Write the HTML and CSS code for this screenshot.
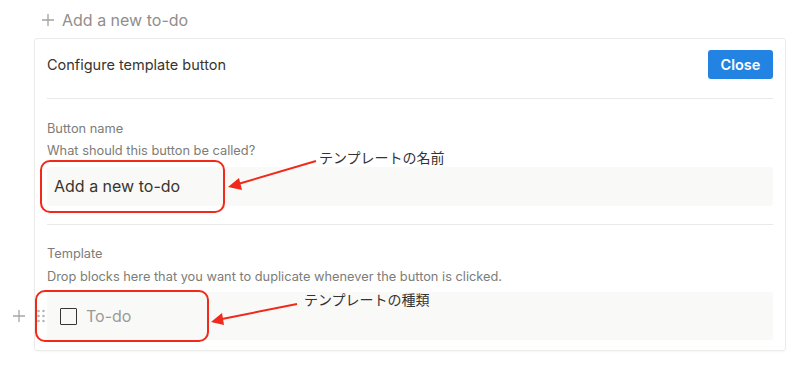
FILE: index.html
```html
<!DOCTYPE html>
<html>
<head>
    <meta charset="UTF-8">
    <title>Configure template button</title>
    <link rel="stylesheet" href="styles.css">
</head>
<body>
<div class="page">
    <div class="add-row">
        <svg class="plus" width="14" height="14" viewBox="0 0 14 14"><path d="M7 1v12M1 7h12" stroke="currentColor" stroke-width="1.3" fill="none"/></svg>
        <span>Add a new to-do</span>
    </div>

    <div class="card">
        <div class="card-head">
            <div class="card-title">Configure template button</div>
            <button class="btn-close">Close</button>
        </div>

        <div class="section">
            <div class="label">Button name</div>
            <div class="hint">What should this button be called?</div>
            <div class="name-box">Add a new to-do</div>
        </div>

        <div class="section last">
            <div class="label">Template</div>
            <div class="hint">Drop blocks here that you want to duplicate whenever the button is clicked.</div>
            <div class="tpl-box">
                <div class="block">
                    <div class="handles">
                        <svg class="plus-sm" width="14" height="14" viewBox="0 0 14 14"><path d="M7 1v12M1 7h12" stroke="currentColor" stroke-width="1.3" fill="none"/></svg>
                        <svg class="drag" width="8" height="14" viewBox="0 0 8 14">
                            <circle cx="1.5" cy="2" r="1.3"/><circle cx="6.5" cy="2" r="1.3"/>
                            <circle cx="1.5" cy="7" r="1.3"/><circle cx="6.5" cy="7" r="1.3"/>
                            <circle cx="1.5" cy="12" r="1.3"/><circle cx="6.5" cy="12" r="1.3"/>
                        </svg>
                    </div>
                    <span class="check"></span>
                    <span class="todo">To-do</span>
                </div>
            </div>
        </div>
    </div>

    <!-- 注釈 -->
    <svg class="notes" width="800" height="375" viewBox="0 0 800 375">
        <rect x="41" y="161" width="183" height="51" rx="9" class="mark"/>
        <line x1="316" y1="161" x2="238" y2="184" class="arrow"/>
        <polygon points="228,187 239,178 242,190" class="head"/>
        <text x="319" y="163" class="note">テンプレートの名前</text>

        <rect x="36" y="291" width="172" height="50" rx="9" class="mark"/>
        <line x1="297" y1="304" x2="222" y2="319" class="arrow"/>
        <polygon points="211,322 222,313 224,325" class="head"/>
        <text x="304" y="305" class="note">テンプレートの種類</text>
    </svg>
</div>
</body>
</html>
```

FILE: styles.css
```css
*{
    margin: 0;
    padding: 0;
    box-sizing: border-box;
}
body{
    background: #fff;
    font-family: Inter, "Noto Sans", sans-serif;
    color: #37352f;
}
.page{
    width: 800px;
    height: 375px;
    position: relative;
    overflow: hidden;
}
.add-row{
    height: 38px;
    padding: 7px 0 0 41px;
    display: flex;
    align-items: flex-start;
    gap: 7px;
    font-size: 16px;
    line-height: 26px;
    color: #8f8e8b;
}
.add-row .plus{
    margin-top: 6px;
    color: #a3a29f;
}
.card{
    margin-left: 34px;
    width: 752px;
    border: 1px solid #ebebe9;
    border-radius: 3px;
    box-shadow: 0 1px 2px rgba(15,15,15,0.04);
    padding: 0 12px;
}
.card-head{
    height: 60px;
    display: flex;
    align-items: center;
    justify-content: space-between;
    border-bottom: 1px solid #e9e9e7;
    padding-bottom: 9px;
}
.card-title{
    font-size: 14.5px;
}
.btn-close{
    width: 65px;
    height: 29px;
    border: none;
    border-radius: 3px;
    background: #2383e2;
    color: #fff;
    font-family: Inter, "Noto Sans", sans-serif;
    font-size: 14.5px;
    font-weight: 600;
}
.section{
    padding: 20px 0 18px;
    border-bottom: 1px solid #e9e9e7;
}
.section.last{
    border-bottom: none;
    padding-top: 19px;
    padding-bottom: 10px;
}
.label, .hint{
    font-size: 12.8px;
    line-height: 20px;
    color: #7d7c78;
}
.hint{
    margin-top: 2px;
}
.last .hint{
    margin-top: 3px;
}
.name-box{
    margin-top: 6px;
    height: 39px;
    background: #f9f9f8;
    border-radius: 3px;
    padding-left: 7px;
    font-size: 16px;
    line-height: 39px;
    color: #37352f;
}
.tpl-box{
    margin-top: 5px;
    height: 48px;
    background: #f9f9f8;
    border-radius: 3px;
}
.block{
    position: relative;
    height: 48px;
    display: flex;
    align-items: center;
    padding-left: 13px;
}
/* ホバー時のハンドル */
.handles{
    position: absolute;
    left: -35px;
    top: 17px;
    display: flex;
    align-items: center;
    gap: 11px;
}
.plus-sm{
    color: #a8a7a4;
}
.drag{
    fill: #b8b7b4;
}
.check{
    width: 17px;
    height: 17px;
    border: 1.8px solid #37352f;
    border-radius: 1px;
    margin-right: 9px;
}
.todo{
    font-size: 16px;
    color: #9b9a97;
}
.notes{
    position: absolute;
    left: 0;
    top: 0;
    pointer-events: none;
}
.mark{
    fill: none;
    stroke: #f0291a;
    stroke-width: 2;
}
.arrow{
    stroke: #f0291a;
    stroke-width: 2;
}
.head{
    fill: #f0291a;
}
.note{
    font-family: "Noto Sans CJK JP", sans-serif;
    font-size: 14px;
    fill: #333;
}
```
